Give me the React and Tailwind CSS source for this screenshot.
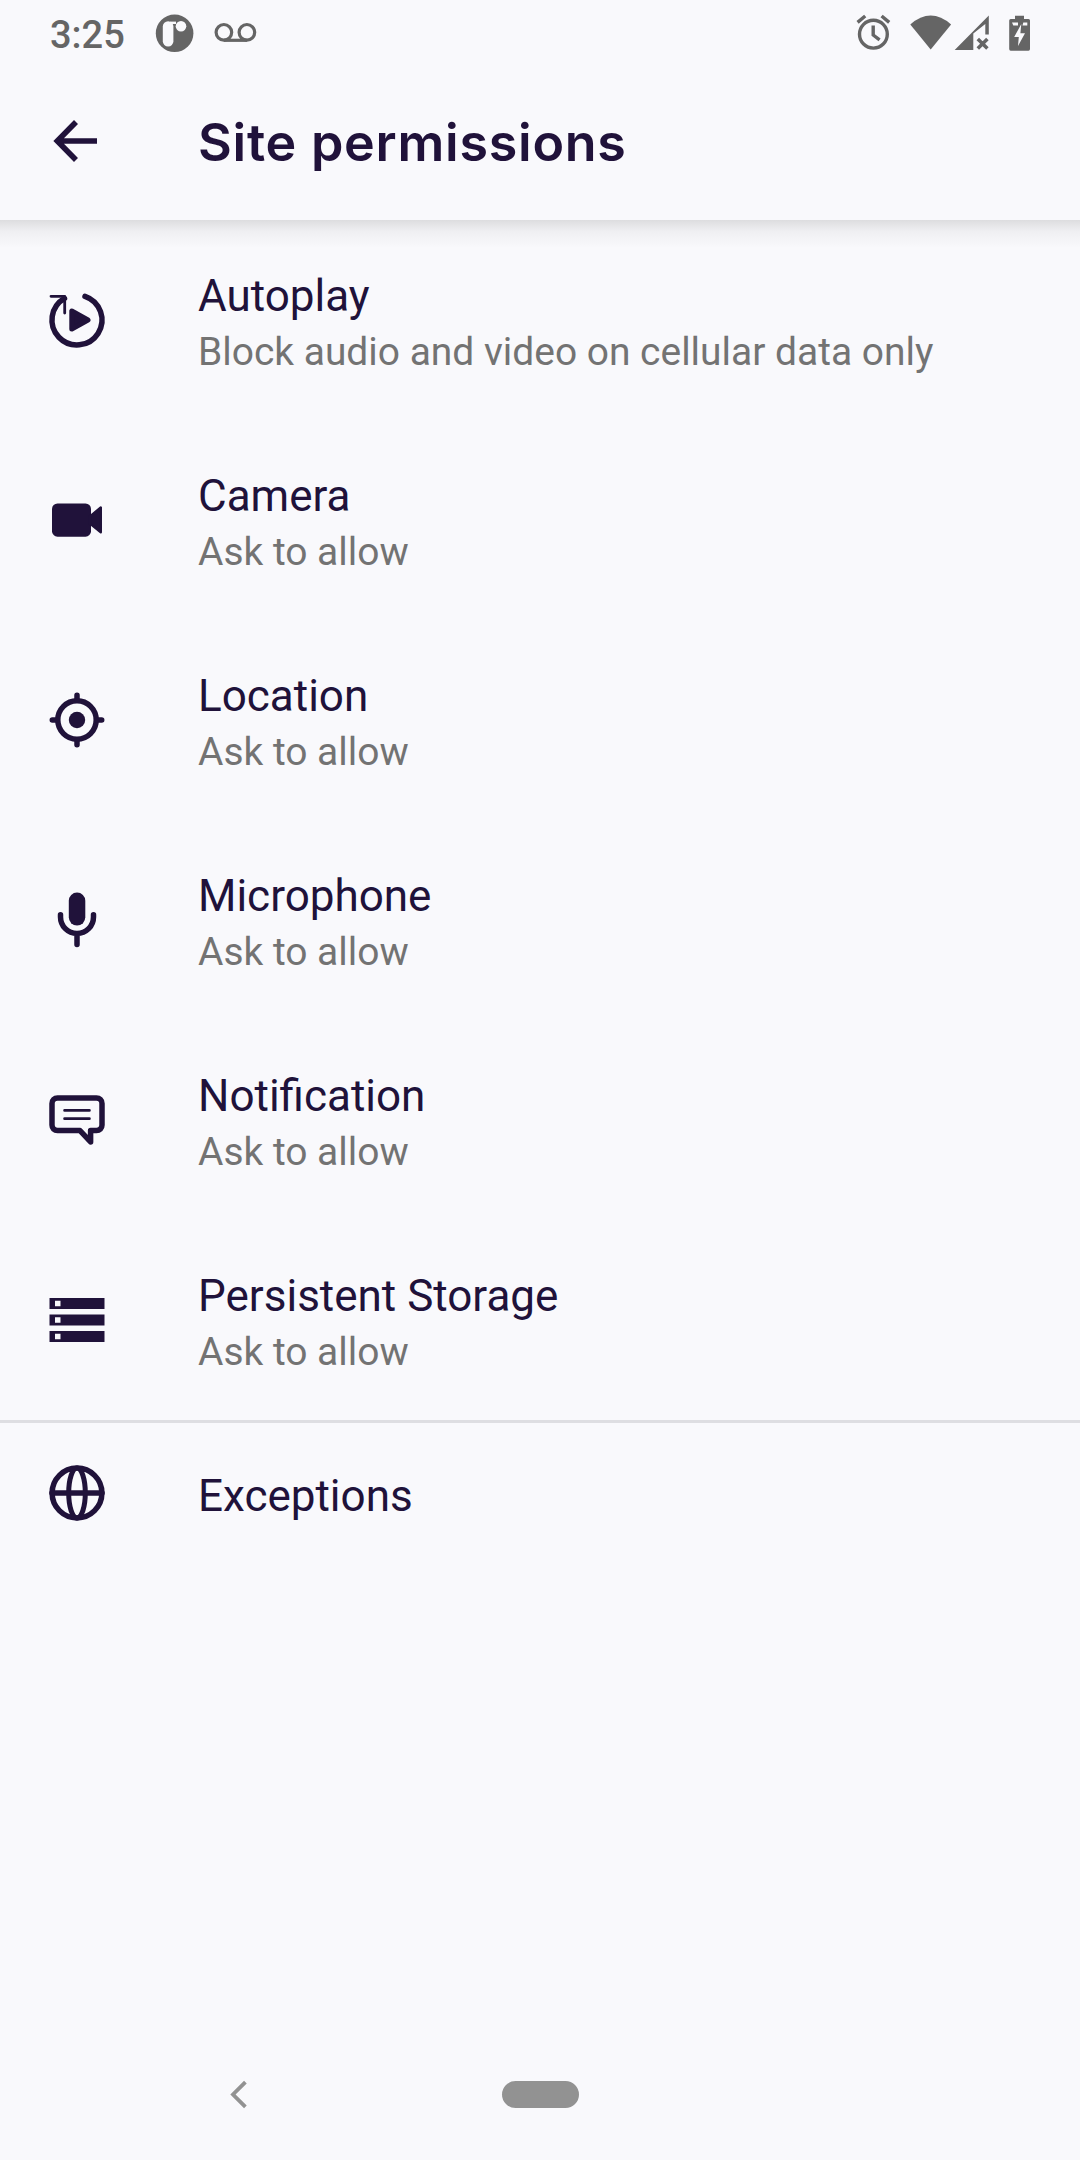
const INK = '#20123a';
const STATUS = '#656565';

function RowIcon({ children }) {
  return (
    <svg className="size-[66px] shrink-0" viewBox="0 0 66 66" fill="none" stroke={INK} strokeWidth="5.5" strokeLinecap="round" strokeLinejoin="round">
      {children}
    </svg>
  );
}

const AutoplayIcon = () => (
  <RowIcon>
    <path d="M41 9.3A25 25 0 1 1 20.5 11.3" />
    <path d="M7 9.3H20.7V26" strokeWidth="2.8" />
    <path d="M27.8 24V42L44 33Z" fill={INK} strokeWidth="5" />
  </RowIcon>
);

const CameraIcon = () => (
  <RowIcon>
    <rect x="8" y="16.4" width="39" height="33.3" rx="5.5" fill={INK} stroke="none" />
    <path d="M46 29.5L56.8 20.4V45.2L46 36.5Z" fill={INK} strokeWidth="2.4" />
  </RowIcon>
);

const LocationIcon = () => (
  <RowIcon>
    <circle cx="33" cy="33" r="19.2" />
    <circle cx="33" cy="33" r="8.2" fill={INK} stroke="none" />
    <path d="M33 8.3V13M33 53V57.7M8.3 33H13M53 33H57.7" />
  </RowIcon>
);

const MicIcon = () => (
  <RowIcon>
    <rect x="24.8" y="5.6" width="16.5" height="33" rx="8.25" fill={INK} stroke="none" />
    <path d="M16.5 27.8V30A16.5 16.5 0 0 0 49.5 30V27.8M33 46.5V57.6" />
  </RowIcon>
);

const NotificationIcon = () => (
  <RowIcon>
    <path d="M13.5 10.9H52.5A5.5 5.5 0 0 1 58 16.4V38A5.5 5.5 0 0 1 52.5 43.6H46.6V54.9L36 43.6H13.5A5.5 5.5 0 0 1 8 38V16.4A5.5 5.5 0 0 1 13.5 10.9Z" />
    <path d="M20.6 23.4H45.4M20.6 31.7H45.4" strokeWidth="2.8" />
  </RowIcon>
);

const StorageIcon = () => (
  <RowIcon>
    <path
      fill={INK}
      stroke="none"
      fillRule="evenodd"
      d="M5.5 11H60.5V22H5.5ZM11 13.75V19.25H16.5V13.75ZM5.5 27.5H60.5V38.5H5.5ZM11 30.25V35.75H16.5V30.25ZM5.5 44H60.5V55H5.5ZM11 46.75V52.25H16.5V46.75Z"
    />
  </RowIcon>
);

const GlobeIcon = () => (
  <RowIcon>
    <circle cx="33" cy="33" r="24.9" />
    <ellipse cx="33" cy="33" rx="8.3" ry="24.9" strokeWidth="5" />
    <path d="M8 33H58" />
  </RowIcon>
);

const rows = [
  { title: 'Autoplay', value: 'Block audio and video on cellular data only', Icon: AutoplayIcon },
  { title: 'Camera', value: 'Ask to allow', Icon: CameraIcon },
  { title: 'Location', value: 'Ask to allow', Icon: LocationIcon },
  { title: 'Microphone', value: 'Ask to allow', Icon: MicIcon },
  { title: 'Notification', value: 'Ask to allow', Icon: NotificationIcon },
  { title: 'Persistent Storage', value: 'Ask to allow', Icon: StorageIcon },
];

function StatusBar() {
  return (
    <div className="flex h-[66px] shrink-0 items-start">
      <span className="ml-[50px] mt-[13px] w-[100px] text-[38px] leading-[45px] font-medium text-[#656565]">3:25</span>
      <svg className="ml-[4px] h-[66px] w-[42px]" viewBox="154 0 42 66">
        <circle cx="174.6" cy="33.3" r="18.8" fill={STATUS} />
        <rect x="162.8" y="21.2" width="10.6" height="25.4" rx="5.3" fill="#f9f9fc" />
        <circle cx="181" cy="26.3" r="5.3" fill="#f9f9fc" />
        <path d="M170 21.6H176V24H170Z" fill="#f9f9fc" />
      </svg>
      <svg className="ml-[16px] h-[66px] w-[48px]" viewBox="212 0 48 66" fill="none" stroke={STATUS} strokeWidth="3.2">
        <circle cx="223.9" cy="32.3" r="7.8" />
        <circle cx="246.9" cy="32.3" r="7.8" />
        <path d="M223.9 40.3H246.9" />
      </svg>
      <svg className="ml-auto h-[66px] w-[40px]" viewBox="854 0 40 66" fill="none" stroke={STATUS} strokeWidth="3.4">
        <circle cx="873.4" cy="34.2" r="13.9" />
        <path d="M857.6 22.4L865.2 16M881.6 16L889.2 22.4M873.2 25.5V35L879.6 39.9" />
      </svg>
      <svg className="ml-[14px] h-[66px] w-[84px]" viewBox="908 0 84 66" fill={STATUS}>
        <path d="M910.3 24.4Q930.7 6.6 951.1 24.4L930.7 49.4Z" />
        <path d="M954.7 50L988.8 15.6V34.4H985.3V24L973.3 33.6V50Z" />
        <path d="M977.8 38.9L987.4 48.6M987.4 38.9L977.8 48.6" fill="none" stroke={STATUS} strokeWidth="3.5" />
      </svg>
      <svg className="mr-[46px] ml-[14px] h-[66px] w-[28px]" viewBox="1006 0 28 66" fill={STATUS}>
        <path d="M1015 15.7H1024V19H1028.5Q1030 19 1030 20.5V49Q1030 50.7 1028.5 50.7H1010.7Q1009.2 50.7 1009.2 49V20.5Q1009.2 19 1010.7 19H1015Z" />
        <path d="M1012 22.4H1018V25.4H1013.3ZM1023.3 22.4H1027.3V25.4H1022.5ZM1021.3 24L1014.2 37H1018.8L1018 46L1025 33.2H1020.4Z" fill="#f9f9fc" />
      </svg>
    </div>
  );
}

export default function App() {
  return (
    <div className="flex h-[2160px] w-[1080px] flex-col overflow-hidden bg-[#f9f9fc] font-[Roboto,sans-serif] text-[#20123a]">
      <StatusBar />
      <header className="relative flex h-[154px] shrink-0 items-start">
        <svg className="mt-[42px] ml-[44px] size-[66px]" viewBox="0 0 66 66" fill="none" stroke={INK} strokeWidth="5.6">
          <path d="M53 33H13M32 14L13.3 33L32 52" />
        </svg>
        <h1 className="mt-[44px] ml-[88px] font-[Inter,sans-serif] text-[52px] leading-[66px] font-semibold tracking-[0.75px] whitespace-nowrap">Site permissions</h1>
        <div className="absolute inset-x-0 top-full h-[28px] bg-linear-to-b from-[#dddddf] via-[#efeff2] via-40% to-[#f9f9fc]" />
      </header>
      <main className="flex flex-col">
        {rows.map(({ title, value, Icon }) => (
          <div key={title} className="flex h-[200px] items-start pl-[44px]">
            <div className="mt-[67px]">
              <Icon />
            </div>
            <div className="mt-[50px] ml-[88px] flex flex-col gap-[7px] whitespace-nowrap">
              <div className="text-[44px] leading-[52px]">{title}</div>
              <div className="text-[38.95px] leading-[46px] text-[#737373]">{value}</div>
            </div>
          </div>
        ))}
        <div className="flex items-start border-t-[3px] border-[#dedee2] pl-[44px]">
          <div className="mt-[37px]">
            <GlobeIcon />
          </div>
          <div className="mt-[47px] ml-[88px] text-[44px] leading-[52px]">Exceptions</div>
        </div>
      </main>
      <nav className="mt-auto mb-[52px] flex h-[27px] items-center">
        <svg className="ml-[229px] h-[29px] w-[20px]" viewBox="0 0 20 29" fill="none" stroke="#929292" strokeWidth="3.8">
          <path d="M16.4 2.2L4 14.5L16.4 26.8" />
        </svg>
        <div className="ml-[253px] h-[27px] w-[77px] rounded-full bg-[#929292]" />
      </nav>
    </div>
  );
}
